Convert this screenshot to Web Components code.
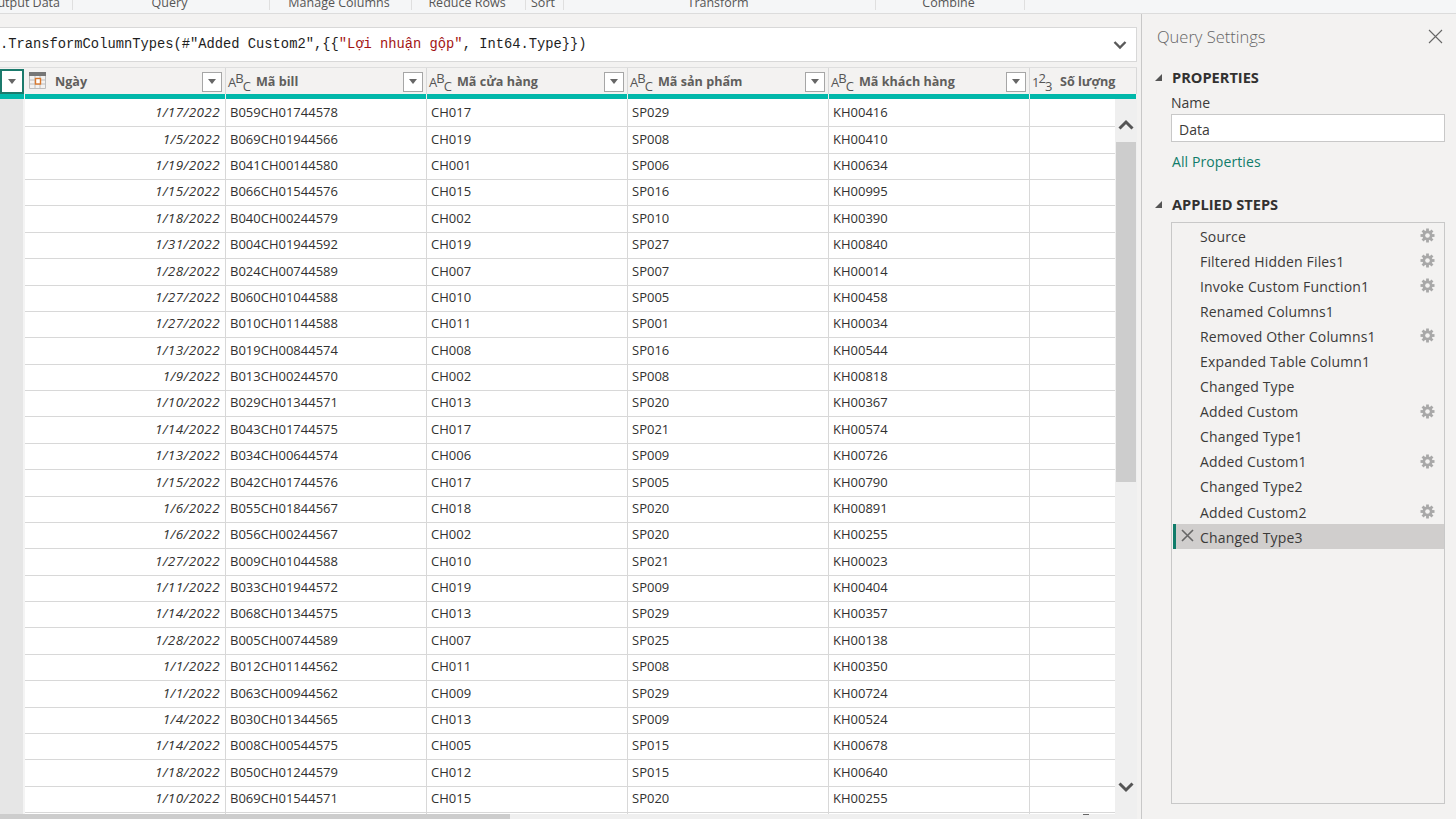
<!DOCTYPE html>
<html lang="vi">
<head>
<meta charset="utf-8">
<title>Power Query Editor</title>
<style>
  html, body { margin: 0; height: 100%; overflow: hidden; background: #f3f2f1; }
  body { font-family: "Open Sans", "Noto Sans", sans-serif; color: #323130; }
  pq-app { height: 819px; }
</style>
</head>
<body>
<pq-app></pq-app>

<script>
const GRID_ROWS = [
  ["1/17/2022","B059CH01744578","CH017","SP029","KH00416"],
  ["1/5/2022","B069CH01944566","CH019","SP008","KH00410"],
  ["1/19/2022","B041CH00144580","CH001","SP006","KH00634"],
  ["1/15/2022","B066CH01544576","CH015","SP016","KH00995"],
  ["1/18/2022","B040CH00244579","CH002","SP010","KH00390"],
  ["1/31/2022","B004CH01944592","CH019","SP027","KH00840"],
  ["1/28/2022","B024CH00744589","CH007","SP007","KH00014"],
  ["1/27/2022","B060CH01044588","CH010","SP005","KH00458"],
  ["1/27/2022","B010CH01144588","CH011","SP001","KH00034"],
  ["1/13/2022","B019CH00844574","CH008","SP016","KH00544"],
  ["1/9/2022","B013CH00244570","CH002","SP008","KH00818"],
  ["1/10/2022","B029CH01344571","CH013","SP020","KH00367"],
  ["1/14/2022","B043CH01744575","CH017","SP021","KH00574"],
  ["1/13/2022","B034CH00644574","CH006","SP009","KH00726"],
  ["1/15/2022","B042CH01744576","CH017","SP005","KH00790"],
  ["1/6/2022","B055CH01844567","CH018","SP020","KH00891"],
  ["1/6/2022","B056CH00244567","CH002","SP020","KH00255"],
  ["1/27/2022","B009CH01044588","CH010","SP021","KH00023"],
  ["1/11/2022","B033CH01944572","CH019","SP009","KH00404"],
  ["1/14/2022","B068CH01344575","CH013","SP029","KH00357"],
  ["1/28/2022","B005CH00744589","CH007","SP025","KH00138"],
  ["1/1/2022","B012CH01144562","CH011","SP008","KH00350"],
  ["1/1/2022","B063CH00944562","CH009","SP029","KH00724"],
  ["1/4/2022","B030CH01344565","CH013","SP009","KH00524"],
  ["1/14/2022","B008CH00544575","CH005","SP015","KH00678"],
  ["1/18/2022","B050CH01244579","CH012","SP015","KH00640"],
  ["1/10/2022","B069CH01544571","CH015","SP020","KH00255"],
  ["","","","",""]
];

const STEPS = [
  ["Source", true], ["Filtered Hidden Files1", true], ["Invoke Custom Function1", true],
  ["Renamed Columns1", false], ["Removed Other Columns1", true], ["Expanded Table Column1", false],
  ["Changed Type", false], ["Added Custom", true], ["Changed Type1", false],
  ["Added Custom1", true], ["Changed Type2", false], ["Added Custom2", true]
];

class PqRibbon extends HTMLElement {
  constructor() {
    super();
    this.attachShadow({ mode: "open" });
    const groups = [["Output Data", 73, "right"], ["Query", 197], ["Manage Columns", 142], ["Reduce Rows", 114],
      ["Sort", 38], ["Transform", 312], ["Combine", 149]];
    this.shadowRoot.innerHTML = `
      <style>
        :host { display: flex; height: 13px; background: #f5f6f7; border-bottom: 1px solid #dcdcdc; overflow: hidden; }
        .g { box-sizing: border-box; flex: none; height: 10px; border-right: 1px solid #dfdfdf; display: flex;
             justify-content: center; white-space: nowrap; font-size: 12.5px; line-height: 12px; color: #555; padding-right: 3px; }
        .g span { margin-top: -3px; }
        .g.right { justify-content: flex-end; padding-right: 12px; }
      </style>
      ${groups.map(([t, w, c]) => `<div class="g ${c || ""}" style="width:${w}px"><span>${t}</span></div>`).join("")}
    `;
  }
}
customElements.define("pq-ribbon", PqRibbon);

class PqFormula extends HTMLElement {
  constructor() {
    super();
    this.attachShadow({ mode: "open" });
    this.shadowRoot.innerHTML = `
      <style>
        :host { display: flex; align-items: center; box-sizing: border-box; height: 35px; background: #fff;
                border: 1px solid #d8d8d8; border-left: 0; padding: 0 9px 0 0; }
        code { flex: 1; font-family: "Liberation Mono", "DejaVu Sans Mono", monospace; font-size: 13.77px; color: #1e1e1e;
               white-space: nowrap; overflow: hidden; margin-top: -1px; }
        b { font-weight: 400; color: #a31515; }
        svg { flex: none; display: block; }
      </style>
      <code>.TransformColumnTypes(#"Added Custom2",{{<b>"Lợi nhuận gộp"</b>, Int64.Type}})</code>
      <svg width="14" height="10" viewBox="0 0 14 10"><path d="M1.5 2 7 7.5 12.5 2" fill="none" stroke="#595959" stroke-width="2.4"/></svg>
    `;
  }
}
customElements.define("pq-formula", PqFormula);

class PqTypeIcon extends HTMLElement {
  constructor() {
    super();
    this.attachShadow({ mode: "open" });
    const kind = this.getAttribute("kind");
    const chars = kind === "num" ? ["1", "2", "3"] : ["A", "B", "C"];
    const cal = `<svg width="17" height="17" viewBox="0 0 17 17">
        <rect x="0" y="0" width="17" height="4" fill="#777"/>
        <path d="M.5 4v12.5h16V4M6 4v12.5M11 4v12.5M.5 8h16M.5 12h16" fill="none" stroke="#bdbdbd"/>
        <rect x="6.5" y="6.5" width="5" height="5.5" fill="#fff" stroke="#d9782d" stroke-width="1.4"/>
      </svg>`;
    this.shadowRoot.innerHTML = `
      <style>
        :host { display: flex; flex: none; width: 21px; height: 20px; align-items: flex-start;
                font-size: 13px; line-height: 14px; color: #555; font-weight: 400; letter-spacing: -1px; }
        :host([kind="date"]) { align-items: center; }
        span:nth-of-type(1) { margin-top: 4px; }
        span:nth-of-type(2) { margin-top: 0; }
        span:nth-of-type(3) { margin-top: 8px; }
        svg { display: block; margin: -1px 0 0 2px; }
      </style>
      ${kind === "date" ? cal : chars.map(c => `<span>${c}</span>`).join("")}
    `;
  }
}
customElements.define("pq-type-icon", PqTypeIcon);

class PqHeadCell extends HTMLElement {
  constructor() {
    super();
    this.attachShadow({ mode: "open" });
    const last = this.hasAttribute("last");
    this.shadowRoot.innerHTML = `
      <style>
        :host { display: flex; align-items: center; box-sizing: border-box; padding: 0 3px 0 2px; min-width: 0;
                border-right: 1px solid #d8d8d8; overflow: hidden; white-space: nowrap; }
        .name { flex: 1; margin-left: 7px; font-size: 12.6px; font-weight: 700; color: #605e5c; }
        .btn { flex: none; box-sizing: border-box; width: 20px; height: 20px; margin-top: 1px; background: #fff; border: 1px solid #a6a6a6;
               display: flex; align-items: center; justify-content: center; }
        .btn::after { content: ""; border: 4px solid transparent; border-top: 5px solid #666; border-bottom: 0; }
      </style>
      <pq-type-icon kind="${this.getAttribute("kind")}"></pq-type-icon>
      <span class="name"><slot></slot></span>
      ${last ? "" : `<span class="btn"></span>`}
    `;
  }
}
customElements.define("pq-head-cell", PqHeadCell);

class PqScrollbar extends HTMLElement {
  constructor() {
    super();
    this.attachShadow({ mode: "open" });
    this.shadowRoot.innerHTML = `
      <style>
        :host { display: flex; flex-direction: column; flex: none; width: 22px; background: #efefef; box-sizing: border-box; }
        .up { height: 43px; display: flex; align-items: flex-start; justify-content: center; padding-top: 20px; box-sizing: border-box; }
        .thumb { height: 340px; margin: 0 1px; background: #cdcdcd; }
        .track { flex: 1; }
        .down { height: 33px; display: flex; justify-content: center; box-sizing: border-box; }
        svg { display: block; }
      </style>
      <div class="up"><svg width="16" height="12" viewBox="0 0 16 12"><path d="M1.5 9.5 8 3l6.500 6.500" fill="none" stroke="#555" stroke-width="3"/></svg></div>
      <div class="thumb"></div>
      <div class="track"></div>
      <div class="down"><svg width="16" height="12" viewBox="0 0 16 12"><path d="M1.500 2.500 8 9l6.500-6.500" fill="none" stroke="#555" stroke-width="3"/></svg></div>
    `;
  }
}
customElements.define("pq-scrollbar", PqScrollbar);

class PqGrid extends HTMLElement {
  constructor() {
    super();
    this.attachShadow({ mode: "open" });
    const body = GRID_ROWS.map(r => `
      <div class="row">
        <div class="num"></div>
        <div class="c date">${r[0]}</div>
        ${r.slice(1).map(v => `<div class="c">${v}</div>`).join("")}
        <div class="c"></div>
      </div>`).join("");
    this.shadowRoot.innerHTML = `
      <style>
        :host { display: flex; flex-direction: column; flex: 1; min-height: 0; }
        .cols { display: grid; grid-template-columns: 25px repeat(5, 201px) 107px; }
        .head { height: 27px; background: #f3f2f1; border-top: 1px solid #dedede; box-sizing: border-box; }
        .corner { box-sizing: border-box; width: 24px; height: 25px; margin-top: 1px; border: 2px solid #1b7a6c; background: #fff;
                  display: flex; align-items: center; justify-content: center; }
        .corner i { box-sizing: border-box; display: flex; align-items: center; justify-content: center; width: 20px; height: 21px; }
        .corner i::after { content: ""; border: 4px solid transparent; border-top: 5px solid #666; border-bottom: 0; }
        .teal { height: 5px; }
        .teal div { background: #01b8aa; border-right: 1px solid #f0f0f0; }
        .wrap { flex: 1; display: flex; min-height: 0; }
        .rows { flex: none; width: 1115px; overflow: hidden; background: #fff; padding-top: .3px; box-sizing: border-box; }
        .row { display: grid; grid-template-columns: 25px repeat(5, 201px) 107px; height: 26.38px; }
        .num { background: #e6e6e6; border-right: 2px solid #f4f4f4; border-bottom: 1px solid #f4f4f4; }
        .c { box-sizing: border-box; padding: 0 4px; line-height: 27px; font-size: 13px; color: #323130; white-space: nowrap;
             border-right: 1px solid #d8d8d8; border-bottom: 1px solid #d8d8d8; }
        .date { text-align: right; font-style: italic; font-size: 13.5px; letter-spacing: .4px; padding-right: 5px; }
        .sb { flex: none; height: 5px; display: flex; background: #efefef; }
        .sb div { width: 510px; background: #cdcdcd; }
        .sb i { position: relative; margin-left: 573px; width: 6px; height: 1px; background: #666; }
      </style>
      <div class="cols head">
        <div class="corner"><i></i></div>
        <pq-head-cell kind="date">Ngày</pq-head-cell>
        <pq-head-cell kind="abc">Mã bill</pq-head-cell>
        <pq-head-cell kind="abc">Mã cửa hàng</pq-head-cell>
        <pq-head-cell kind="abc">Mã sản phẩm</pq-head-cell>
        <pq-head-cell kind="abc">Mã khách hàng</pq-head-cell>
        <pq-head-cell kind="num" last>Số lượng</pq-head-cell>
      </div>
      <div class="cols teal"><div></div><div></div><div></div><div></div><div></div><div></div><div></div></div>
      <div class="wrap">
        <div class="rows">${body}</div>
        <pq-scrollbar></pq-scrollbar>
      </div>
      <div class="sb"><div></div><i></i></div>
    `;
  }
}
customElements.define("pq-grid", PqGrid);

class PqStep extends HTMLElement {
  constructor() {
    super();
    this.attachShadow({ mode: "open" });
    const teeth = [0, 45, 90, 135].map(a => `<rect x="-1.400" y="-7" width="2.800" height="14" transform="rotate(${a})"/>`).join("");
    this.shadowRoot.innerHTML = `
      <style>
        :host { display: flex; align-items: center; box-sizing: border-box; height: 25.1px; padding-left: 28px; padding-right: 9px;
                font-size: 14px; color: #3b3a39; white-space: nowrap; }
        :host([selected]) { background: #d0cecd; border-left: 3px solid #107c6a; padding-left: 24px; margin-left: 1px; margin-top: -1px; }
        .x { display: none; flex: none; width: 13px; height: 13px; margin-left: -19px; margin-right: 6px; margin-top: -2px; }
        :host([selected]) .x { display: block; }
        .t { flex: 1; letter-spacing: .16px; margin-top: -1px; }
        :host([selected]) .t { margin-top: 1px; }
        .gear { flex: none; display: none; margin-top: -2px; }
        :host([gear]) .gear { display: block; }
      </style>
      <svg class="x" viewBox="0 0 13 13"><path d="M1 1l11 11M12 1 1 12" stroke="#666" stroke-width="1.600" fill="none"/></svg>
      <span class="t"><slot></slot></span>
      <svg class="gear" width="15" height="15" viewBox="-7.500 -7.500 15 15" fill="#a8a8a8">${teeth}
        <circle r="5"/><circle r="2.300" fill="#f3f2f1"/></svg>
    `;
  }
}
customElements.define("pq-step", PqStep);

class PqSection extends HTMLElement {
  constructor() {
    super();
    this.attachShadow({ mode: "open" });
    this.shadowRoot.innerHTML = `
      <style>
        :host { display: flex; align-items: center; font-size: 14.6px; font-weight: 700; color: #323130; height: 20px; gap: 10px; }
        i { flex: none; width: 0; height: 0; margin-left: -1px; border-style: solid; border-width: 0 0 7px 7px; border-color: transparent transparent #555 transparent; }
      </style>
      <i></i><span><slot></slot></span>
    `;
  }
}
customElements.define("pq-section", PqSection);

class PqSettings extends HTMLElement {
  constructor() {
    super();
    this.attachShadow({ mode: "open" });
    this.shadowRoot.innerHTML = `
      <style>
        :host { display: flex; flex-direction: column; flex: 1; box-sizing: border-box; min-width: 0; background: #f3f2f1;
                border-left: 1px solid #c8c8c8; padding: 0 11px 15px 14px; }
        .title { display: flex; align-items: center; justify-content: space-between; height: 46px; padding-right: 2px; }
        .title span { font-size: 16.500px; font-weight: 300; color: #666; margin: -2px 0 0 1px; }
        .title svg { display: block; margin-top: -2px; }
        .label { margin: 6px 0 0 15px; font-size: 14px; line-height: 20px; color: #3b3a39; }
        .input { box-sizing: border-box; height: 28px; margin: 1px 0 0 15px; background: #fff; border: 1px solid #c8c8c8;
                 font-size: 14px; line-height: 29px; padding-left: 7px; color: #3b3a39; }
        .link { margin: 10px 0 0 16px; font-size: 14px; line-height: 20px; color: #107c6a; letter-spacing: .1px; }
        .steps { flex: 1; margin: 8px 0 0 15px; box-sizing: border-box; border: 1px solid #c8c8c8; padding-top: 1px; }
      </style>
      <div class="title"><span>Query Settings</span>
        <svg width="15" height="15" viewBox="0 0 15 15"><path d="M1 1l13 13M14 1 1 14" stroke="#666" stroke-width="1.100" fill="none"/></svg>
      </div>
      <pq-section style="margin-top:7px">PROPERTIES</pq-section>
      <div class="label">Name</div>
      <div class="input">Data</div>
      <div class="link">All Properties</div>
      <pq-section style="margin-top:22px">APPLIED STEPS</pq-section>
      <div class="steps">
        ${STEPS.map(([t, g]) => `<pq-step ${g ? "gear" : ""}>${t}</pq-step>`).join("")}
        <pq-step selected>Changed Type3</pq-step>
      </div>
    `;
  }
}
customElements.define("pq-settings", PqSettings);

class PqApp extends HTMLElement {
  constructor() {
    super();
    this.attachShadow({ mode: "open" });
    this.shadowRoot.innerHTML = `
      <style>
        :host { display: flex; flex-direction: column; }
        .main { flex: 1; display: flex; min-height: 0; }
        .left { flex: none; width: 1141px; box-sizing: border-box; padding: 13px 4px 0 0; display: flex; flex-direction: column; background: #f3f2f1; }
        pq-grid { margin-top: 5px; }
      </style>
      <pq-ribbon></pq-ribbon>
      <div class="main">
        <div class="left">
          <pq-formula></pq-formula>
          <pq-grid></pq-grid>
        </div>
        <pq-settings></pq-settings>
      </div>
    `;
  }
}
customElements.define("pq-app", PqApp);
</script>
</body>
</html>
